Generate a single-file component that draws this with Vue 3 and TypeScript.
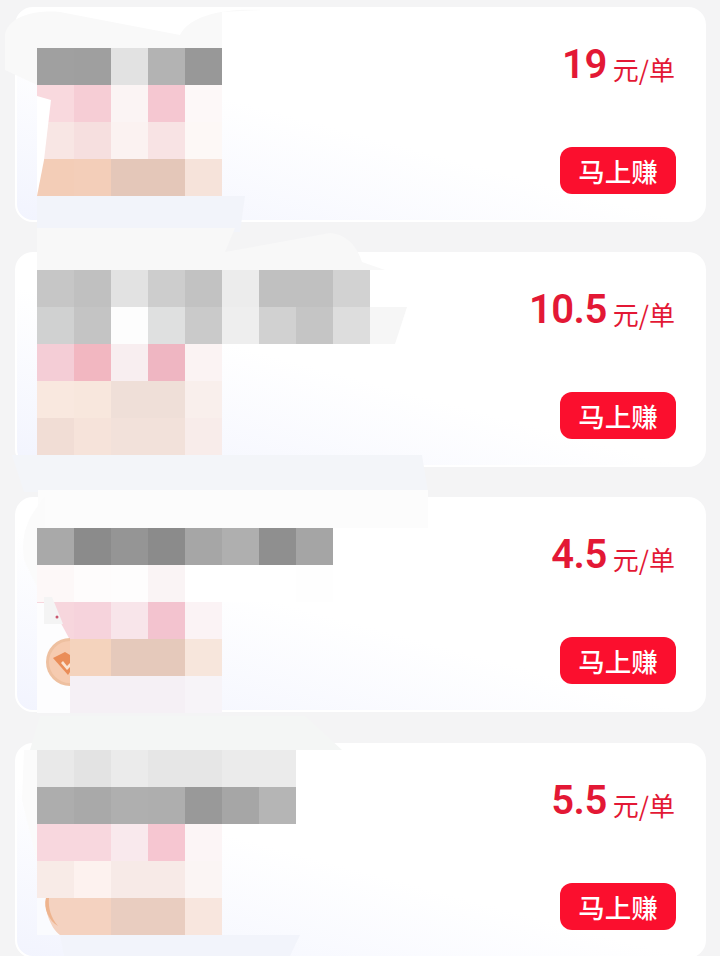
<template>
  <div class="page">
    <!-- smudges that sit behind the mosaic -->
    <svg class="smudge under" width="720" height="956" viewBox="0 0 720 956">
      <path d="M5 34C10 14 40 10 60 12L112 22 180 35C190 15 225 8 262 10L222 12V48H37L37 85 5 70Z" fill="#f9f9f9" />
      <path d="M37 196H245L240 232H37Z" fill="#f2f4fa" />
      <path d="M37 228H235L225 252 330 233C350 235 358 250 362 262L385 270H37Z" fill="#f8f8f8" />
      <path d="M12 455H422L428 492H24Z" fill="#f3f5f9" />
      <path d="M370 307H407L395 344H370Z" fill="#f6f6f6" />
      <path d="M38 490H428V528H38Z" fill="#fcfcfc" />
      <path d="M24 560C20 530 30 515 45 497V603Z" fill="#fbfbfb" />
      <path d="M40 716H305L342 750H30Z" fill="#f4f6f5" />
      <path d="M24 750H37V898L46 898 22 800Z" fill="#fbfbfb" />
      <path d="M60 935H300L290 956H64Z" fill="#f2f4fb" />
    </svg>

    <article v-for="card in cards" :key="card.price" class="card">
      <div class="mosaic" :style="{ paddingTop: card.top + 'px' }">
        <div v-for="(row, r) in card.rows" :key="r" class="mosaic-row">
          <span v-for="(c, i) in row" :key="i" class="cell" :style="{ background: c }" />
        </div>
      </div>
      <div class="side">
        <div class="price"><b>{{ card.price }}</b><span>元/单</span></div>
        <button class="earn">马上赚</button>
      </div>
    </article>

    <!-- smudges that cut across the mosaic -->
    <svg class="smudge over" width="720" height="956" viewBox="0 0 720 956">
      <path d="M37 96L51 100 44 160 37 196Z" fill="#fff" />
      <path d="M37 603H50L70 640V713H37Z" fill="#fdfdfe" />
      <path d="M44 597H52L63 624H44Z" fill="#f4f4f4" />
      <circle cx="57" cy="617" r="1.5" fill="#c9566f" />
      <path d="M70 638A24 24 0 0 0 70 686Z" fill="#eec0a0" />
      <path d="M70 641A21 21 0 0 0 70 683Z" fill="#f6cbb0" />
      <path d="M53 658L65 652 70 655V672L68 675Z" fill="#ea8d58" />
      <path d="M63 661L67 666 70 663V667L67 670 61 663Z" fill="#fbe3d2" />
      <path d="M37 898H46C44 908 50 928 60 935H37Z" fill="#fafbfe" />
      <path d="M46 898C43 908 49 921 58 926C51 918 48 908 49 898Z" fill="#eeb48e" />
    </svg>
  </div>
</template>

<script setup lang="ts">
const cards = [
  {
    price: '19',
    top: 39,
    rows: [
      ['#a0a0a0', '#9f9f9f', '#e2e2e2', '#b3b3b3', '#989898'],
      ['#f9d9de', '#f6cdd5', '#fbf4f4', '#f5c7d1', '#fdf8f8'],
      ['#f8e6e4', '#f6dfdf', '#fbf2f1', '#f8e3e4', '#fdf8f6'],
      ['#f3cdb7', '#f3ceb9', '#e4c7b9', '#e4c7b9', '#f6e3da'],
    ],
  },
  {
    price: '10.5',
    top: 15.8,
    rows: [
      ['#c6c6c6', '#c0c0c0', '#e2e2e2', '#cdcdcd', '#c2c2c2', '#ececec', '#c0c0c0', '#c0c0c0', '#d2d2d2'],
      ['#d0d1d1', '#c4c4c4', '#fdfdfd', '#dfe0e0', '#cacaca', '#eeeeee', '#d1d1d1', '#c5c5c5', '#dddddd'],
      ['#f4cdd6', '#f2b7c1', '#f8eef0', '#efb6c2', '#fbf3f3'],
      ['#f9e8df', '#f8e7dd', '#efdfd8', '#efdfd8', '#f9efec'],
      ['#f1ddd5', '#f6e3da', '#f2e1da', '#f2e1da', '#f8ecea'],
    ],
  },
  {
    price: '4.5',
    top: 28.6,
    rows: [
      ['#a9a9a9', '#8b8b8b', '#959595', '#8b8b8b', '#a6a6a6', '#afafaf', '#8f8f8f', '#a5a5a5'],
      ['#fdf8f8', '#fefcfc', '#fefdfd', '#faf4f5', '#ffffff', '#ffffff', '#ffffff', '#fefefe'],
      ['#f7d6dd', '#f6d3dc', '#f8e5ea', '#f3c3cf', '#fbf3f5'],
      ['#f4d3bd', '#f4d3bd', '#e5c9bb', '#e5c9bb', '#f7e6dc'],
      ['#f5f0f5', '#f5f0f5', '#f5f0f5', '#f5f0f5', '#f7f4f8'],
    ],
  },
  {
    price: '5.5',
    top: 5.4,
    rows: [
      ['#e9e9e9', '#e3e3e3', '#ebebeb', '#e6e6e6', '#e6e6e6', '#ebebeb', '#ebebeb'],
      ['#adadad', '#a9a9a9', '#afafaf', '#aeaeae', '#999999', '#a6a6a6', '#b5b5b5'],
      ['#f8d7de', '#f8d7de', '#f9e9ed', '#f6c6d1', '#fcf5f6'],
      ['#f8ebe7', '#fdf2ef', '#f7eae7', '#f7eae7', '#fbf5f4'],
      ['#f4d2c0', '#f4d2c0', '#e9cdc0', '#e9cdc0', '#f8e6de'],
    ],
  },
]
</script>

<style scoped>
.page {
  position: relative;
  height: 956px;
  overflow: hidden;
  box-sizing: border-box;
  padding: 7px 14px 0 15px;
  background: #f4f4f5;
  display: flex;
  flex-direction: column;
  gap: 30.2px;
  font-family: 'Noto Sans CJK SC', sans-serif;
}

.card {
  flex: none;
  height: 215px;
  box-sizing: border-box;
  display: flex;
  justify-content: space-between;
  padding: 0 28px 0 20px;
  border: 2px solid #fff;
  border-radius: 18px;
  background: linear-gradient(195deg, #fff 55%, #f2f4fe 100%);
}

.mosaic {
  position: relative;
  z-index: 2;
}
.mosaic-row {
  display: flex;
  height: 37px;
}
.cell {
  width: 37px;
  height: 37px;
}

.side {
  display: flex;
  flex-direction: column;
  align-items: flex-end;
  padding-top: 29px;
}

.price {
  display: flex;
  align-items: baseline;
  gap: 6px;
  height: 54px;
  margin-right: 1px;
  color: #e31835;
  font-size: 26px;
  line-height: 54px;
}
.price b {
  font-family: Roboto, sans-serif;
  font-size: 40px;
  font-weight: 600;
  letter-spacing: -0.5px;
}
.price span {
  transform: translateY(2px);
}

.earn {
  margin-top: 55px;
  width: 116px;
  height: 47px;
  padding: 0;
  border: none;
  border-radius: 12px;
  background: #fb0f2e;
  color: #fff;
  font-family: inherit;
  font-size: 26.5px;
  font-weight: 500;
}

.smudge {
  position: absolute;
  left: 0;
  top: 0;
  pointer-events: none;
}
.under { z-index: 1; }
.over { z-index: 3; }
</style>
